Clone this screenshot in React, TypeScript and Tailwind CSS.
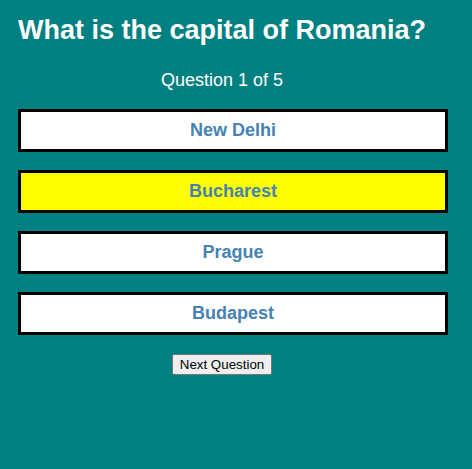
import React from "react";

const options = [
  { label: "New Delhi", selected: false },
  { label: "Bucharest", selected: true },
  { label: "Prague", selected: false },
  { label: "Budapest", selected: false },
];

export default function App() {
  return (
    <div
      className="min-h-screen w-full bg-[#008080] pl-[18px] pt-[15px]"
      style={{ fontFamily: '"Liberation Sans", Arial, sans-serif' }}
    >
      <h1 className="m-0 text-[27px] font-bold leading-[31px] text-white">
        What is the capital of Romania?
      </h1>
      <div className="mt-[24px] w-[408px] text-center text-[18px] leading-[21px] text-white">
        Question 1 of 5
      </div>
      <div className="mt-[18px] flex w-[430px] flex-col gap-[18px]">
        {options.map((o) =>
          o.selected ? (
            <div
              key={o.label}
              className="border-[3px] border-black bg-[#ffff00] py-2 text-center text-[18px] font-bold leading-[21px] text-[#4682b4]"
            >
              {o.label}
            </div>
          ) : (
            <div
              key={o.label}
              className="border-[3px] border-black bg-white py-2 text-center text-[18px] font-bold leading-[21px] text-[#4682b4]"
            >
              {o.label}
            </div>
          )
        )}
      </div>
      <div className="mt-[19px] flex w-[408px] justify-center">
        <button className="rounded-[2px] border border-[#767676] bg-[#efefef] px-[7px] py-[2px] text-[13.33px] leading-[15px] text-black">
          Next Question
        </button>
      </div>
    </div>
  );
}
